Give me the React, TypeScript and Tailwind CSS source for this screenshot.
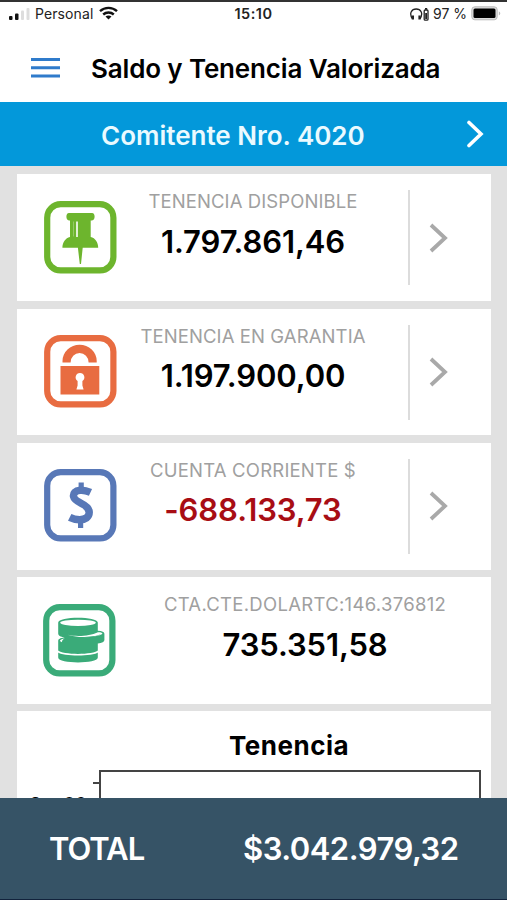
import type { ReactNode } from "react";

interface Holding {
  label: string;
  value: string;
  icon: ReactNode;
  labelClass: string;
  valueClass: string;
  hasDetail: boolean;
}

function IconFrame({ color, children }: { color: string; children: ReactNode }) {
  return (
    <svg width="73" height="73" viewBox="0 0 73 73" fill={color}>
      <rect x="3.2" y="3.2" width="66.2" height="66.2" rx="13.5" fill="none" stroke={color} strokeWidth="6.2" />
      {children}
    </svg>
  );
}

function PinIcon() {
  return (
    <IconFrame color="#6db52d">
      <path d="M25 12h23c1.800 0 2.600 1.600 2.600 3.600s-.8 3.900-2.600 3.900h-1.300V36c4.500 1 7.500 5.200 7.500 10.800H38.700L37 63h-1.200l-1.900-16.200H18.400C18.400 41.200 21.500 37 26 36V19.500h-1c-1.800 0-2.600-1.900-2.600-3.900S23.200 12 25 12z" />
      <path d="M29 20.500h.7v15h-.7z" fill="#fff" opacity=".4" />
      <path d="M32.200 20.500h1.600v15.500h-1.600z" fill="#fff" />
    </IconFrame>
  );
}

function LockIcon() {
  return (
    <IconFrame color="#e86c41">
      <path d="M18.500 27.500v-1.500a17.100 16.200 0 0 1 34.200 0v1.500h-8.100a9 9.500 0 0 0-18 0z" />
      <path d="M16.500 31h38.800v28.500H16.500z" />
      <path d="M36 38a4.300 4.300 0 0 1 2.400 7.900v4.600l1.200 4h-7.200l1.200-4v-4.600A4.300 4.300 0 0 1 36 38z" fill="#fff" />
    </IconFrame>
  );
}

function DollarIcon() {
  return (
    <IconFrame color="#5878b7">
      <path
        d="M46.500 23.400c-3.700-1.700-7.100-2.500-10.300-2.200-5 .4-7.200 3.200-6.600 6.500.6 3.100 4.300 5 7.800 6.800 4.500 2.200 7.700 4.600 7.800 8.600.1 5.200-4.200 7.600-9.500 7.600-3.600 0-7-.8-10-2.300"
        fill="none"
        stroke="#5878b7"
        strokeWidth="7.500"
      />
      <path d="M34.600 13.500h5.200v7h-5.200zM34 52h5.200v7H34z" />
    </IconFrame>
  );
}

function CoinsIcon() {
  return (
    <IconFrame color="#3aab79">
      <path d="M15.200 49.500V36.800c0-1.600 1.800-2.600 6.500-3.200-4.500-.8-6.500-2-6.500-4V18.500c0-6.500 39.600-6.500 39.600 0V26.800c4.400.3 6.600 1.300 6.600 3v6.200c0 1.900-2.300 3-6.600 3.500V53.500c0 6.500-39.600 6.500-39.600 0z" />
      <ellipse cx="35" cy="18.800" rx="17.800" ry="3.100" fill="#fff" />
      <path d="M24.500 30.800c10 2.300 23 1 29.800-2.400 2.800-.2 4.500.3 5.200 1.300-4.500 3.600-24.500 5-35 1.100z" fill="#fff" />
      <path d="M27 31.900c8 2 24.500 1.200 31-1.600-6 4-24 5-31 1.600z" />
      <path d="M16.800 37c.6-1.500 2.600-2.200 5-2.400-2.400 1.200-2.800 2.200-2.800 3.600z" fill="#fff" />
      <path d="M14.500 46c5 5.200 36 5.200 41 0v2.300c-6 4.300-35 4.300-41 0z" fill="#fff" />
    </IconFrame>
  );
}

const holdings: Holding[] = [
  {
    label: "TENENCIA DISPONIBLE",
    value: "1.797.861,46",
    icon: <PinIcon />,
    labelClass: "tracking-[0.1px]",
    valueClass: "text-black",
    hasDetail: true,
  },
  {
    label: "TENENCIA EN GARANTIA",
    value: "1.197.900,00",
    icon: <LockIcon />,
    labelClass: "tracking-[0.1px]",
    valueClass: "text-black",
    hasDetail: true,
  },
  {
    label: "CUENTA CORRIENTE $",
    value: "-688.133,73",
    icon: <DollarIcon />,
    labelClass: "tracking-[0.2px]",
    valueClass: "text-[#a80d14]",
    hasDetail: true,
  },
  {
    label: "CTA.CTE.DOLARTC:146.376812",
    value: "735.351,58",
    icon: <CoinsIcon />,
    labelClass: "tracking-[0.3px]",
    valueClass: "text-black",
    hasDetail: false,
  },
];

function StatusBar() {
  return (
    <div className="flex h-[26px] shrink-0 items-center justify-between border-t-2 border-[#333] pl-[9px] pr-[6px] text-[14px] text-[#222]">
      <div className="flex w-[180px] items-center">
        <svg width="21" height="14" viewBox="0 0 21 14" fill="#111">
          <rect x="0" y="9" width="3.500" height="4" rx="1" />
          <rect x="6" y="6.500" width="3.500" height="6.500" rx="1" />
          <rect x="12" y="3.500" width="3" height="9.500" rx="1" fill="#ddd" />
          <rect x="17.500" y="1" width="3" height="12" rx="1" fill="#ddd" />
        </svg>
        <span className="-mt-[1px] ml-[5px] tracking-[0.1px]">Personal</span>
        <svg className="-mt-[2px] ml-[6px]" width="19" height="14" viewBox="0 0 19 14" fill="none" stroke="#111" strokeWidth="2.400">
          <path d="M1 5.200C5.800.8 13.200.8 18 5.200M4.200 8.500c3-2.700 7.600-2.700 10.600 0" />
          <path d="M9.500 13.500l-3-3c1.700-1.500 4.300-1.500 6 0z" fill="#111" stroke="none" />
        </svg>
      </div>
      <span className="-ml-[3px] text-[14.500px] font-semibold tracking-[0.5px]">15:10</span>
      <div className="flex w-[180px] items-center justify-end">
        <svg width="19" height="13" viewBox="0 0 19 13" fill="none" stroke="#222" strokeWidth="1.300">
          <path d="M2.500 11C-1.500 5 2 1 6.200 1s7.700 4 3.700 10" />
          <path d="M2.900 7.500v4M9.500 7.500v4" strokeWidth="2.200" />
          <rect x="14.200" y="2" width="3.800" height="10.200" rx="1" />
          <path d="M15 .8h2.200M16.100 5v6" strokeWidth="1.800" />
        </svg>
        <span className="-mt-[1px] ml-[4px] whitespace-nowrap">97 %</span>
        <svg className="-mt-[2px] ml-[4px]" width="30" height="15" viewBox="0 0 30 15">
          <rect x=".8" y=".8" width="25.400" height="13" rx="3" fill="#ddd" stroke="#bbb" strokeWidth="1" />
          <rect x="2.500" y="2.600" width="22" height="9.400" rx="1.500" fill="#000" />
          <path d="M27.800 5.200c2 .8 2 3.400 0 4.200z" fill="#bbb" />
        </svg>
      </div>
    </div>
  );
}

function HoldingCard({ holding }: { holding: Holding }) {
  return (
    <section className="flex h-[126.700px] shrink-0 bg-white">
      <div className={`w-[102px] shrink-0 pt-[26.500px] ${holding.hasDetail ? "pl-[26.500px]" : "pl-[25.500px]"}`}>
        {holding.icon}
      </div>
      <div className="flex flex-1 flex-col items-center pt-[15px] whitespace-nowrap">
        <span className={`text-[18.500px] leading-[24px] text-[#a0a0a0] ${holding.labelClass}`}>
          {holding.label}
        </span>
        <span className={`mt-[9.500px] text-[31px] leading-[38px] font-semibold tracking-[-0.1px] ${holding.valueClass}`}>
          {holding.value}
        </span>
      </div>
      {holding.hasDetail && (
        <div className="flex w-[104px] shrink-0 pl-[21px] pt-[16px]">
          <div className="h-[95px] border-l-2 border-[#dcdcdc]" />
          <svg className="ml-[18px] mt-[31.500px]" width="22" height="32" viewBox="0 0 22 32" fill="none" stroke="#a9a9a9" strokeWidth="3.800">
            <path d="M3 3l14 13L3 29" />
          </svg>
        </div>
      )}
    </section>
  );
}

export default function App() {
  return (
    <div className="flex h-[900px] w-[507px] flex-col overflow-hidden bg-white font-['Inter','Liberation_Sans',sans-serif]">
      <StatusBar />
      <header className="flex h-[76.400px] shrink-0 items-center pl-[31px] pt-[7px]">
        <svg width="29" height="20" viewBox="0 0 29 20" fill="#2f7bcb">
          <path d="M0 0h29v3H0zM0 8.300h29v3H0zM0 16.600h29v3H0z" />
        </svg>
        <h1 className="mt-[2px] ml-[31px] whitespace-nowrap text-[26px] leading-[32px] font-semibold tracking-[-0.15px] text-black">
          Saldo y Tenencia Valorizada
        </h1>
      </header>
      <div className="flex h-[63.600px] shrink-0 items-center bg-[#0398da] pl-[101px] pr-[23px] text-[#eafaff]">
        <span className="mt-[3px] whitespace-nowrap text-[26px] leading-[32px] font-semibold">
          Comitente Nro. 4020
        </span>
        <svg className="ml-auto" width="18" height="28" viewBox="0 0 18 28" fill="none" stroke="#fff" strokeWidth="3.600" strokeLinecap="round">
          <path d="M3 2.500L15 14 3 25.500" />
        </svg>
      </div>
      <main className="flex min-h-0 flex-1 flex-col gap-[7.600px] overflow-hidden bg-[#e1e1e1] pl-[17px] pr-[16px] pt-[8.300px]">
        {holdings.map((holding) => (
          <HoldingCard key={holding.label} holding={holding} />
        ))}
        <section className="flex h-[300px] shrink-0 flex-col bg-white pt-[17.500px]">
          <h2 className="pl-[212px] text-[26px] leading-[34px] font-bold tracking-[0.500px] text-black">Tenencia</h2>
          <div className="mt-[7px] flex">
            <div className="flex w-[82px] justify-end">
              <div className="flex flex-col items-end">
                <div className="mt-[12px] h-[2px] w-[6px] bg-[#444]" />
                <span className="mr-[13px] mt-[9.500px] font-['Liberation_Sans',sans-serif] text-[20px] leading-[22px] text-black">
                  2e+06
                </span>
              </div>
            </div>
            <div className="h-[240px] w-[382px] border-2 border-[#444]" />
          </div>
        </section>
      </main>
      <footer className="flex h-[102px] shrink-0 items-center border-b border-[#12233c] bg-[#365366] pl-[49px] pt-[2px] text-white">
        <span className="w-[194px] text-[31px] font-semibold tracking-[-1px]">TOTAL</span>
        <span className="whitespace-nowrap text-[31px] font-semibold tracking-[-0.500px]">$3.042.979,32</span>
      </footer>
    </div>
  );
}
